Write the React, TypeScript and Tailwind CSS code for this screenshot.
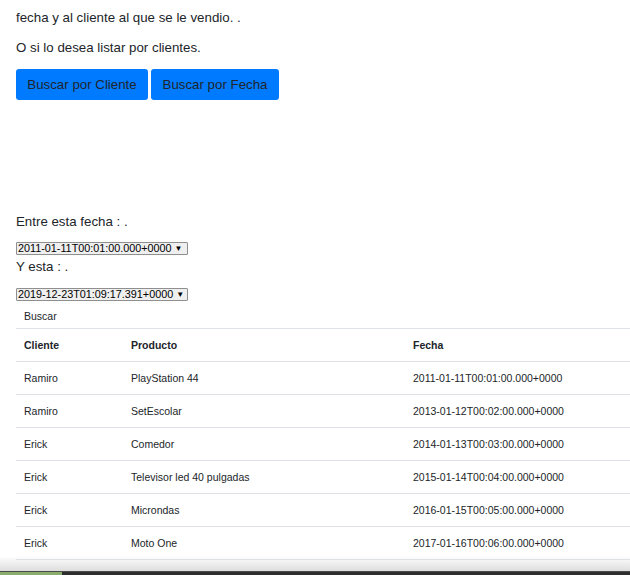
import React from "react";

const ventas = [
  { cliente: "Ramiro", producto: "PlayStation 44", fecha: "2011-01-11T00:01:00.000+0000" },
  { cliente: "Ramiro", producto: "SetEscolar", fecha: "2013-01-12T00:02:00.000+0000" },
  { cliente: "Erick", producto: "Comedor", fecha: "2014-01-13T00:03:00.000+0000" },
  { cliente: "Erick", producto: "Televisor led 40 pulgadas", fecha: "2015-01-14T00:04:00.000+0000" },
  { cliente: "Erick", producto: "Microndas", fecha: "2016-01-15T00:05:00.000+0000" },
  { cliente: "Erick", producto: "Moto One", fecha: "2017-01-16T00:06:00.000+0000" },
];

function FakeSelect({ value }: { value: string }) {
  return (
    <div className="flex items-center gap-[3px] w-[172px] h-[13px] border border-[#8f8f8f] bg-[#efefef] text-[10.8px] leading-[11px] text-black pl-[1px] pr-[5px] rounded-[1px] whitespace-nowrap overflow-hidden">
      <span className="flex-1">{value}</span>
      <span className="text-[8px]">▼</span>
    </div>
  );
}

export default function App() {
  return (
    <div className="relative min-h-[575px] bg-white text-[#212529] font-['Liberation_Sans',Arial,sans-serif] overflow-hidden">
      <div className="pl-[16px] pt-[8px]">
        <p className="text-[13.3px] leading-[20px]">fecha y al cliente al que se le vendio. .</p>
        <p className="text-[13.3px] leading-[20px] mt-[10px]">O si lo desea listar por clientes.</p>

        <div className="flex gap-[3px] mt-[11px]">
          <button className="h-[31px] w-[132px] bg-[#007bff] text-[#212529] text-[13.3px] rounded-[3px]">
            Buscar por Cliente
          </button>
          <button className="h-[31px] w-[128px] bg-[#007bff] text-[#212529] text-[13.3px] rounded-[3px]">
            Buscar por Fecha
          </button>
        </div>

        <p className="text-[13.3px] leading-[20px] mt-[112px]">Entre esta fecha : .</p>
        <div className="mt-[10px]">
          <FakeSelect value="2011-01-11T00:01:00.000+0000" />
        </div>
        <p className="text-[13.3px] leading-[20px] mt-[2px]">Y esta : .</p>
        <div className="mt-[11px]">
          <FakeSelect value="2019-12-23T01:09:17.391+0000" />
        </div>

        <div className="h-[27px] flex items-center pl-[8px] pt-[5px] text-[10.5px]">Buscar</div>

        <div className="w-[614px] text-[10.5px]">
          <div className="grid grid-cols-[107px_282px_1fr] h-[34px] items-center pt-[1px] border-t border-b border-[#dee2e6] font-bold">
            <div className="pl-[8px]">Cliente</div>
            <div className="pl-[8px]">Producto</div>
            <div className="pl-[8px]">Fecha</div>
          </div>
          {ventas.map((v, i) => (
            <div key={i} className="grid grid-cols-[107px_282px_1fr] h-[33px] items-center pt-[2px] border-b border-[#dee2e6]">
              <div className="pl-[8px]">{v.cliente}</div>
              <div className="pl-[8px]">{v.producto}</div>
              <div className="pl-[8px]">{v.fecha}</div>
            </div>
          ))}
        </div>
      </div>

      <div className="fixed bottom-0 left-0 right-0">
        <div className="h-[15px] bg-gradient-to-b from-white/0 to-[#dedede]" />
        <div className="h-[1px] bg-[#4a4a4a]" />
        <div className="h-[3px] flex">
          <div className="w-[62px] bg-[#8aac6c]" />
          <div className="flex-1 bg-[#2d2d2d]" />
        </div>
      </div>
    </div>
  );
}
